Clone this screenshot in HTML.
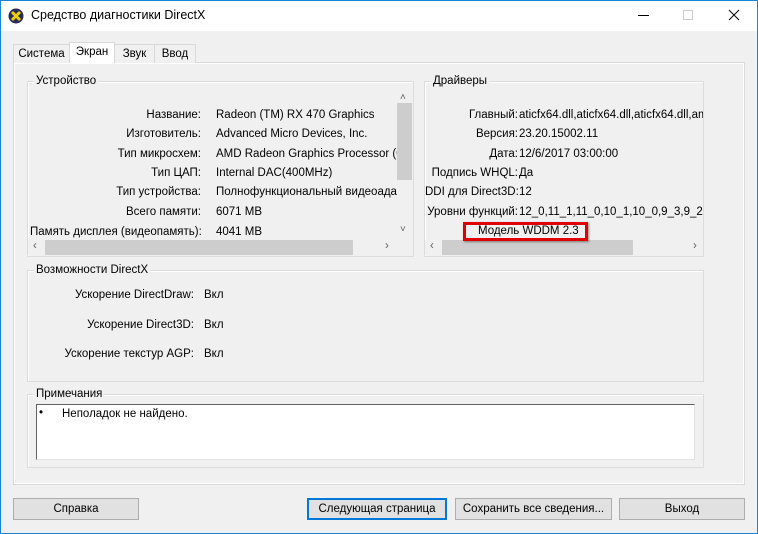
<!DOCTYPE html>
<html><head><meta charset="utf-8"><style>
*{margin:0;padding:0;box-sizing:border-box}
body{width:758px;height:534px;overflow:hidden;background:#f0f0f0;font-family:"Liberation Sans","DejaVu Sans",sans-serif;font-size:11.5px;color:#000;position:relative}
.a{position:absolute}
.win{left:0;top:0;width:758px;height:534px;border:1px solid #1883d7}
.title{left:1px;top:1px;width:756px;height:30px;background:#fff}
.grp{position:absolute;border:1px solid #dcdcdc;box-shadow:1px 1px 0 #fff inset}
.lg{position:absolute;background:#f0f0f0;padding:0 2px;top:-7px;left:6px}
.r{position:absolute;text-align:right;white-space:nowrap}
.l{position:absolute;white-space:nowrap}
.btn{position:absolute;top:498px;height:22px;background:#e1e1e1;border:1px solid #adadad;text-align:center;line-height:21px}
.tab{position:absolute;top:44px;height:19px;border:1px solid #d9d9d9;border-bottom:none;background:#f0f0f0;text-align:center;line-height:18px}
.sb{position:absolute;background:#f0f0f0}
</style></head><body>
<div class="a win"></div>
<div class="a title"></div>
<svg class="a" style="left:8px;top:8px" width="16" height="16" viewBox="0 0 16 16"><circle cx="8" cy="8" r="7.5" fill="#2a2a5a"/><path d="M4 4L12 12M12 4L4 12" stroke="#e8d000" stroke-width="3"/></svg>
<div class="l" style="left:31px;top:8px;font-size:12.5px">Средство диагностики DirectX</div>
<div class="a" style="left:638px;top:15px;width:11px;height:1px;background:#000"></div>
<div class="a" style="left:683px;top:10px;width:10px;height:10px;border:1px solid #ccc"></div>
<svg class="a" style="left:728px;top:9px" width="12" height="12"><path d="M1 1L11 11M11 1L1 11" stroke="#000" stroke-width="1"/></svg>

<div class="a" style="left:13px;top:62px;width:732px;height:423px;border:1px solid #d9d9d9;box-shadow:inset 1px 1px 0 #fff,inset -1px -1px 0 #fff;background:#f0f0f0"></div>
<div class="tab" style="left:13px;width:57px">Система</div>
<div class="tab" style="left:69px;top:42px;height:21px;width:46px;background:#fff;z-index:2;line-height:19px">Экран</div>
<div class="tab" style="left:114px;width:41px">Звук</div>
<div class="tab" style="left:154px;width:42px">Ввод</div>

<div class="grp" style="left:27px;top:81px;width:387px;height:176px">
<div class="lg">Устройство</div></div>
<div class="r" style="left:30px;width:171px;top:109px">Название:</div>
<div class="r" style="left:30px;width:171px;top:128px">Изготовитель:</div>
<div class="r" style="left:30px;width:171px;top:148px">Тип микросхем:</div>
<div class="r" style="left:30px;width:171px;top:167px">Тип ЦАП:</div>
<div class="r" style="left:30px;width:171px;top:186px">Тип устройства:</div>
<div class="r" style="left:30px;width:171px;top:206px">Всего памяти:</div>
<div class="r" style="left:30px;width:171px;top:226px">Память дисплея (видеопамять):</div>
<div class="a" style="left:216px;top:100px;width:181px;height:140px;overflow:hidden">
<div class="l" style="top:9px">Radeon (TM) RX 470 Graphics</div>
<div class="l" style="top:28px">Advanced Micro Devices, Inc.</div>
<div class="l" style="top:48px">AMD Radeon Graphics Processor (0x67DF)</div>
<div class="l" style="top:67px">Internal DAC(400MHz)</div>
<div class="l" style="top:86px">Полнофункциональный видеоадаптер</div>
<div class="l" style="top:106px">6071 MB</div>
<div class="l" style="top:126px">4041 MB</div></div>
<div class="sb" style="left:397px;top:87px;width:15px;height:153px"></div>
<div class="a" style="left:397px;top:103px;width:15px;height:77px;background:#cdcdcd"></div>
<div class="l" style="left:400px;top:92px;font-size:10px;color:#606060">&#x2C4;</div>
<div class="l" style="left:400px;top:224px;font-size:10px;color:#606060">&#x2C5;</div>
<div class="sb" style="left:28px;top:240px;width:384px;height:15px"></div>
<div class="a" style="left:45px;top:240px;width:308px;height:15px;background:#cdcdcd"></div>
<div class="l" style="left:33px;top:240px;color:#606060">&lsaquo;</div>
<div class="l" style="left:385px;top:240px;color:#606060">&rsaquo;</div>

<div class="grp" style="left:424px;top:81px;width:280px;height:176px"><div class="lg">Драйверы</div></div>
<div class="a" style="left:425px;top:100px;width:278px;height:140px;overflow:hidden">
<div class="r" style="left:0;width:93px;top:9px">Главный:</div><div class="l" style="left:94px;top:9px">aticfx64.dll,aticfx64.dll,aticfx64.dll,amdxc64.dll</div>
<div class="r" style="left:0;width:93px;top:28px">Версия:</div><div class="l" style="left:94px;top:28px">23.20.15002.11</div>
<div class="r" style="left:0;width:93px;top:48px">Дата:</div><div class="l" style="left:94px;top:48px">12/6/2017 03:00:00</div>
<div class="r" style="left:0;width:93px;top:67px">Подпись WHQL:</div><div class="l" style="left:94px;top:67px">Да</div>
<div class="r" style="left:0;width:93px;top:86px">DDI для Direct3D:</div><div class="l" style="left:94px;top:86px">12</div>
<div class="r" style="left:0;width:93px;top:106px">Уровни функций:</div><div class="l" style="left:94px;top:106px">12_0,11_1,11_0,10_1,10_0,9_3,9_2,9_1</div>
</div>
<div class="sb" style="left:425px;top:240px;width:278px;height:15px"></div>
<div class="a" style="left:442px;top:240px;width:191px;height:15px;background:#cdcdcd"></div>
<div class="l" style="left:430px;top:240px;color:#606060">&lsaquo;</div>
<div class="l" style="left:693px;top:240px;color:#606060">&rsaquo;</div>
<div class="a" style="left:463px;top:222px;width:125px;height:19px;border:3px solid #e00000;background:#f0f0f0;box-shadow:1px 1px 2px rgba(0,0,0,.4)"></div>
<div class="l" style="left:478px;top:225px">Модель WDDM 2.3</div>

<div class="grp" style="left:27px;top:270px;width:677px;height:112px"><div class="lg">Возможности DirectX</div></div>
<div class="r" style="left:30px;width:164px;top:289px">Ускорение DirectDraw:</div><div class="l" style="left:204px;top:289px">Вкл</div>
<div class="r" style="left:30px;width:164px;top:319px">Ускорение Direct3D:</div><div class="l" style="left:204px;top:319px">Вкл</div>
<div class="r" style="left:30px;width:164px;top:348px">Ускорение текстур AGP:</div><div class="l" style="left:204px;top:348px">Вкл</div>

<div class="grp" style="left:27px;top:394px;width:677px;height:74px"><div class="lg">Примечания</div></div>
<div class="a" style="left:36px;top:404px;width:659px;height:56px;background:#fff;border-top:1px solid #646464;border-left:1px solid #646464;border-right:1px solid #e3e3e3;border-bottom:1px solid #e3e3e3"></div>
<div class="l" style="left:39px;top:407px">•</div>
<div class="l" style="left:62px;top:408px">Неполадок не найдено.</div>

<div class="btn" style="left:13px;width:126px">Справка</div>
<div class="btn" style="left:307px;width:140px;border:2px solid #0078d7;line-height:19px">Следующая страница</div>
<div class="btn" style="left:455px;width:157px">Сохранить все сведения...</div>
<div class="btn" style="left:619px;width:126px">Выход</div>
</body></html>
